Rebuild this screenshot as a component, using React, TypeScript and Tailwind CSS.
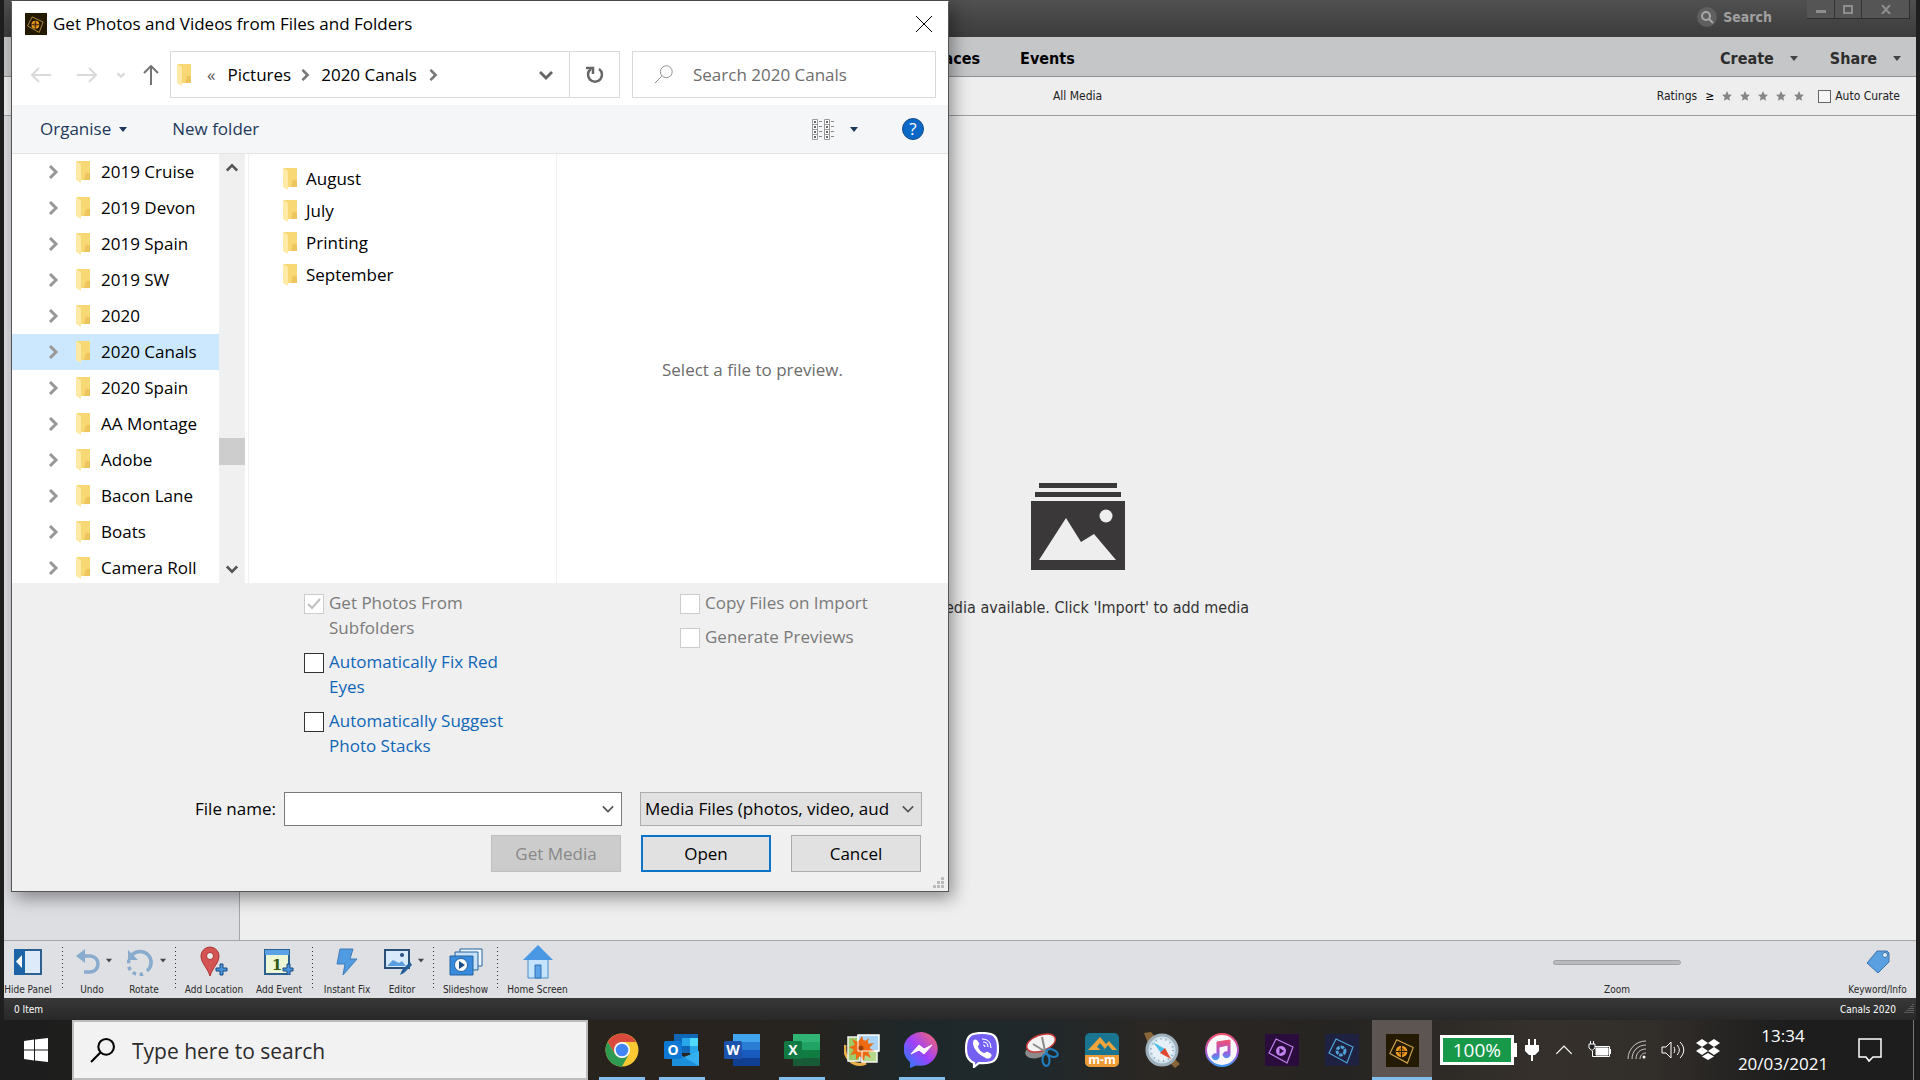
import React from "react";
import clsx from "clsx";

const treeFolders = [
  "2019 Cruise",
  "2019 Devon",
  "2019 Spain",
  "2019 SW",
  "2020",
  "2020 Canals",
  "2020 Spain",
  "AA Montage",
  "Adobe",
  "Bacon Lane",
  "Boats",
  "Camera Roll",
];

const files = ["August", "July", "Printing", "September"];

/* ---------- small icons ---------- */

const Folder = () => (
  <svg width="14" height="22" viewBox="0 0 14 22" className="shrink-0">
    <path d="M1 0h13v19H5z" fill="#f8d775" />
    <path d="M10 12h4v7H8z" fill="#eec55c" />
    <path d="M0 0l5 3v19l-5-3z" fill="#ffe9a6" />
  </svg>
);

const Chevron = ({
  dir,
  className,
  thick = 3,
}: {
  dir: "right" | "down" | "up";
  className?: string;
  thick?: number;
}) => (
  <svg
    width="14"
    height="14"
    viewBox="0 0 14 14"
    fill="none"
    stroke="currentColor"
    strokeWidth={thick}
    className={clsx("shrink-0", className)}
  >
    {dir === "right" && <path d="M4 1l6 6-6 6" />}
    {dir === "down" && <path d="M1 4l6 6 6-6" />}
    {dir === "up" && <path d="M1 10l6-6 6 6" />}
  </svg>
);

const Caret = ({ className }: { className?: string }) => (
  <svg width="8" height="5" viewBox="0 0 8 5" className={clsx("shrink-0", className)}>
    <path d="M0 0h8L4 5z" fill="currentColor" />
  </svg>
);

const Magnifier = ({
  size,
  thick = 1,
  className,
}: {
  size: number;
  thick?: number;
  className?: string;
}) => (
  <svg
    width={size}
    height={size}
    viewBox="0 0 24 24"
    fill="none"
    stroke="currentColor"
    strokeWidth={thick}
    className={clsx("shrink-0", className)}
  >
    <circle cx="15.500" cy="8.500" r="7.500" />
    <path d="M10 14L1 23" />
  </svg>
);

const OrganizerLogo = ({ size }: { size: number }) => (
  <svg width={size} height={size} viewBox="0 0 34 34" className="shrink-0">
    <path d="M0 0h34v34H0z" fill="#241a02" />
    <path d="M11 6l17 8-6 16-18-10z" fill="none" stroke="#d0a548" strokeWidth="1.200" />
    <circle cx="16" cy="18" r="6" fill="#f29a1c" />
    <path d="M16 12v12M10 18h12" stroke="#241a02" strokeWidth="1.200" />
    <circle cx="16" cy="18" r="3" fill="none" stroke="#241a02" strokeWidth=".7" />
  </svg>
);

/* ---------- organizer window behind the dialog ---------- */

const TitleBar = () => (
  <header className="flex h-[37px] items-start justify-end bg-linear-to-b from-[#505050] to-[#3c3c3c] pr-1 text-[#a0a0a0]">
    <button className="mt-[7px] mr-[35px] flex items-center gap-1.5 text-sm leading-5 font-bold">
      <span className="flex size-5 items-center justify-center rounded-full bg-[#5f5f5f]">
        <svg width="14" height="14" viewBox="0 0 14 14" fill="none" stroke="#a8a8a8" strokeWidth="2">
          <circle cx="6" cy="6" r="4" />
          <path d="M9 9l4 4" />
        </svg>
      </span>
      <span>Search</span>
    </button>
    <div className="mr-0.5 flex h-[19px] divide-x divide-[#333] border-r border-b border-[#2e2e2e] bg-[#555]">
      <button aria-label="Minimise" className="flex w-7 items-center justify-center">
        <svg width="10" height="10"><path d="M0 6h10v3H0z" fill="#8e8e8e" /></svg>
      </button>
      <button aria-label="Maximise" className="flex w-[27px] items-center justify-center">
        <svg width="10" height="9"><path d="M1 1h8v7H1z" fill="none" stroke="#8e8e8e" strokeWidth="2" /></svg>
      </button>
      <button aria-label="Close organizer" className="flex w-[47px] items-center justify-center">
        <svg width="10" height="9"><path d="M1 0l8 9M9 0L1 9" stroke="#8e8e8e" strokeWidth="2" /></svg>
      </button>
    </div>
  </header>
);

const NavBar = () => (
  <nav className="flex h-10 items-center border-b border-[#8f9091] bg-[#c5c6c8] pt-1 pr-[15px] pl-[924px] text-base font-bold">
    <button className="mr-10 text-black">Places</button>
    <button className="text-black">Events</button>
    <div className="ml-auto flex items-center gap-8 text-[#2d2d2d]">
      <button className="flex items-center gap-4">
        Create <Caret className="text-[#444]" />
      </button>
      <button className="flex items-center gap-4">
        Share <Caret className="text-[#444]" />
      </button>
    </div>
  </nav>
);

const FilterBar = () => (
  <div className="grid h-[39px] shrink-0 grid-cols-[1fr_auto_1fr] items-center border-b border-[#9f9f9f] bg-[#eee] pr-4 pl-[235px] text-xs text-[#222]">
    <span />
    <span className="pl-4">All Media</span>
    <div className="flex items-center justify-end">
      <span>Ratings</span>
      <span className="ml-2 text-black">≥</span>
      <span className="ml-2 flex gap-2">
        {[1, 2, 3, 4, 5].map((star) => (
          <button key={star} aria-label={`${star} stars`}>
            <svg width="10" height="10" viewBox="0 0 10 10">
              <path d="M5 0l1.500 3.500 3.500.3-2.700 2.400.8 3.600L5 7.900 1.900 9.800l.8-3.600L0 3.800l3.500-.3z" fill="#858585" />
            </svg>
          </button>
        ))}
      </span>
      <label className="ml-3.5 flex items-center gap-1">
        <input type="checkbox" className="size-[13px] appearance-none border border-[#666] bg-[#f6f6f6]" />
        Auto Curate
      </label>
    </div>
  </div>
);

const EmptyLibrary = () => (
  <main className="flex flex-1 bg-[#eee]">
    <aside className="w-[236px] shrink-0 border-r border-[#a5a6a8] bg-[#dddee2]" />
    <section className="flex flex-1 flex-col items-center pt-[367px] text-base text-[#333]">
      <svg width="96" height="87" viewBox="0 0 96 87">
        <path d="M9 0h78v5H9zM5 9h86v5H5zM1 18h94v69H1z" fill="#3a3839" />
        <path d="M9 77l27-42 15 24 13-8 22 26z" fill="#eee" />
        <circle cx="76" cy="33" r="6.500" fill="#eee" />
      </svg>
      <p className="mt-[26px]">No media available. Click &apos;Import&apos; to add media</p>
    </section>
  </main>
);

const Tool = ({
  label,
  width,
  caret,
  children,
}: {
  label: string;
  width: string;
  caret?: boolean;
  children: React.ReactNode;
}) => (
  <button className={clsx("flex shrink-0 flex-col items-center pt-px", width)}>
    <span className={clsx("flex h-10 items-center justify-center gap-1.5", caret && "pl-1")}>
      {children}
      {caret && <Caret className="mb-1 w-1.5 text-[#444]" />}
    </span>
    <span className="text-[10px] leading-4 whitespace-nowrap">{label}</span>
  </button>
);

const Separator = () => (
  <span className="mt-1.5 h-[43px] w-px shrink-0 bg-[repeating-linear-gradient(#333_0_1px,transparent_1px_4px)]" />
);

const ToolBar = () => (
  <footer className="flex h-[58px] shrink-0 overflow-hidden border-t border-[#a5a6a8] bg-[#dee0e4] text-[#2a2a2a]">
    <Tool label="Hide Panel" width="w-[48px]">
      <svg width="28" height="26" viewBox="0 0 28 26">
        <path d="M1 1h26v24H1z" fill="#dceafa" stroke="#2c618f" strokeWidth="2" />
        <path d="M0 0h11v26H0z" fill="#1c64a5" />
        <path d="M8 6v13l-6-6.500z" fill="#fff" />
      </svg>
    </Tool>
    <span className="w-2.5 shrink-0" />
    <Separator />
    <Tool label="Undo" width="w-[58px]" caret>
      <svg width="24" height="26" viewBox="0 0 24 26" fill="none" stroke="#89abce" strokeWidth="3.500">
        <path d="M5 7h9a7.500 7.500 0 010 16H8" />
        <path d="M9 0v14L0 7z" fill="#89abce" stroke="none" />
      </svg>
    </Tool>
    <Tool label="Rotate" width="w-[46px]" caret>
      <svg width="27" height="27" viewBox="0 0 27 27" fill="none" stroke="#89abce" strokeWidth="3.500">
        <path d="M5 6a11 11 0 1115 16" />
        <path d="M16 25a11 11 0 01-14-14" strokeDasharray="3.500 3.500" />
        <path d="M1 1v10h10z" fill="#89abce" stroke="none" />
      </svg>
    </Tool>
    <span className="w-2 shrink-0" />
    <Separator />
    <Tool label="Add Location" width="w-[76px]">
      <svg width="28" height="32" viewBox="0 0 28 32">
        <path d="M10 1a9 9 0 00-9 9c0 7 6 11 9 20 3-9 9-13 9-20a9 9 0 00-9-9z" fill="#d45353" stroke="#a93434" />
        <circle cx="10" cy="10" r="3.500" fill="#eee" stroke="#a93434" />
        <path d="M20 18h3v4h4v3h-4v4h-3v-4h-4v-3h4z" fill="#4a93dc" stroke="#174b80" />
      </svg>
    </Tool>
    <Tool label="Add Event" width="w-[54px]">
      <svg width="30" height="26" viewBox="0 0 30 26">
        <path d="M1 1h24v24H1z" fill="#edf7d5" stroke="#2c618f" strokeWidth="2" />
        <path d="M1 1h24v5H1z" fill="#5ba2e6" />
        <text x="13" y="21" textAnchor="middle" className="font-['DejaVu_Serif',serif] text-[15px] font-bold" fill="#2f5a16">1</text>
        <path d="M23 15h3v4h3v3h-3v4h-3v-4h-4v-3h4z" fill="#4a93dc" stroke="#174b80" />
      </svg>
    </Tool>
    <span className="w-1.5 shrink-0" />
    <Separator />
    <Tool label="Instant Fix" width="w-[68px]">
      <svg width="22" height="28" viewBox="0 0 22 28">
        <path d="M4 1h13l-3 10h7L7 27l2-11H1z" fill="#519be2" stroke="#3f7cb8" />
      </svg>
    </Tool>
    <Tool label="Editor" width="w-[42px]" caret>
      <svg width="28" height="26" viewBox="0 0 28 26">
        <path d="M1 1h24v18H1z" fill="#d7e9fb" stroke="#2a4f76" strokeWidth="2" />
        <path d="M3 17l6-6 6 3 3-2 4 5z" fill="#5b9ee0" />
        <circle cx="18" cy="6" r="2" fill="#234e7c" />
        <path d="M26 13l2 3-8 8-4 2 2-5z" fill="#245f9b" />
      </svg>
    </Tool>
    <span className="w-2.5 shrink-0" />
    <Separator />
    <Tool label="Slideshow" width="w-[63px]">
      <svg width="34" height="28" viewBox="0 0 34 28" stroke="#25629f">
        <path d="M11 1h22v17H11z" fill="#eef6ff" />
        <path d="M6 4h23v18H6z" fill="#c8e1f8" />
        <path d="M1 8h23v19H1z" fill="#388bdc" />
        <circle cx="12" cy="17" r="6.500" fill="#fff" />
        <path d="M10 13v8l6-4z" fill="#164f88" stroke="none" />
      </svg>
    </Tool>
    <Separator />
    <Tool label="Home Screen" width="w-[79px]">
      <svg width="30" height="34" viewBox="0 0 30 34">
        <path d="M5 14h20v19H5z" fill="#c5e3fc" stroke="#4b8bc9" />
        <path d="M15 0l15 15H0z" fill="#4a98e4" />
        <path d="M12 20h6v13h-6z" fill="#5ba2e6" stroke="#2e73b3" />
      </svg>
    </Tool>
    <div className="ml-auto flex shrink-0 flex-col items-center pt-0.5 text-[10px]">
      <span className="flex h-10 items-center">
        <input
          type="range"
          id="zoom"
          className="h-[5px] w-32 appearance-none rounded-full border border-[#a0a2a6] bg-[#b9babd] [&::-webkit-slider-thumb]:invisible"
        />
      </span>
      <label htmlFor="zoom" className="leading-4">Zoom</label>
    </div>
    <span className="w-[158px] shrink-0" />
    <Tool label="Keyword/Info" width="w-[77px]">
      <svg width="24" height="24" viewBox="0 0 24 24">
        <path d="M11 1h10l2 2v9L12 23 1 13z" fill="#5a9fe0" stroke="#3d76ad" strokeLinejoin="round" />
        <circle cx="19" cy="5" r="2.500" fill="#e3eefa" stroke="#3d76ad" />
      </svg>
    </Tool>
  </footer>
);

/* ---------- import dialog ---------- */

const AddressBar = () => (
  <div className="flex h-[47px] items-stretch pr-3 pl-[19px]">
    <div className="flex w-[139px] shrink-0 items-center text-[#d9d9d9]">
      <button aria-label="Back">
        <svg width="20" height="16" viewBox="0 0 20 16" fill="none" stroke="currentColor" strokeWidth="2">
          <path d="M8 1L1 8l7 7M1 8h19" />
        </svg>
      </button>
      <button aria-label="Forward" className="ml-[26px]">
        <svg width="20" height="16" viewBox="0 0 20 16" fill="none" stroke="currentColor" strokeWidth="2">
          <path d="M12 1l7 7-7 7M19 8H0" />
        </svg>
      </button>
      <button aria-label="Recent locations" className="ml-5">
        <Chevron dir="down" thick={4} className="size-2" />
      </button>
      <button aria-label="Up" className="ml-[18px] text-[#747474]">
        <svg width="16" height="20" viewBox="0 0 16 20" fill="none" stroke="currentColor" strokeWidth="2">
          <path d="M1 8l7-7 7 7M8 1v19" />
        </svg>
      </button>
    </div>
    <div className="flex w-[450px] shrink-0 border border-[#d9d9d9]">
      <div className="flex flex-1 items-center pr-4 pl-1.5">
        <Folder />
        <span className="ml-4 text-[#555]">«</span>
        <button className="ml-3">Pictures</button>
        <Chevron dir="right" className="ml-2 size-3 text-[#777]" />
        <button className="ml-2.5">2020 Canals</button>
        <Chevron dir="right" className="ml-2.5 size-3 text-[#777]" />
        <button aria-label="Previous locations" className="ml-auto text-[#666]">
          <Chevron dir="down" />
        </button>
      </div>
      <button aria-label="Refresh" className="flex w-[50px] items-center justify-center border-l border-[#d9d9d9] text-[#666]">
        <svg width="18" height="18" viewBox="0 0 18 18" fill="none" stroke="currentColor" strokeWidth="2.500">
          <path d="M13 3a7 7 0 11-8 0" />
          <path d="M0 2h7v6" />
        </svg>
      </button>
    </div>
    <label className="ml-3 flex flex-1 items-center border border-[#d9d9d9] pl-[21px] text-[#777]">
      <Magnifier size={19} />
      <input
        aria-label="Search 2020 Canals"
        placeholder="Search 2020 Canals"
        className="ml-5 min-w-0 flex-1 outline-none placeholder:text-[#6d6d6d]"
      />
    </label>
  </div>
);

const CommandBar = () => (
  <div className="mt-[7px] flex h-[49px] items-center border-b border-[#e2e4e6] bg-[#f4f6f8] pr-6 pl-7 text-[#1e395b]">
    <button className="flex items-center gap-2">
      Organise <Caret />
    </button>
    <button className="ml-[45px]">New folder</button>
    <button aria-label="Change your view" className="ml-auto flex items-center gap-4">
      <svg width="22" height="21" viewBox="0 0 22 21" fill="none">
        <path
          d="M.5.5h5v20h-5zM.5 5.500h5M.5 10.500h5M.5 15.500h5M12.500.5h5v20h-5zM12.500 5.500h5M12.500 10.500h5M12.500 15.500h5"
          stroke="#999"
          fill="#fff"
        />
        <path d="M7 2.500h3M7 7.500h3M7 12.500h3M7 17.500h3M19 2.500h3M19 7.500h3M19 12.500h3M19 17.500h3" stroke="#888" />
        <path d="M2 3h2M2 8h2M2 13h2M2 18h2M14 3h2M14 8h2M14 13h2M14 18h2" stroke="#666" strokeWidth="2" />
      </svg>
      <Caret />
    </button>
    <button
      aria-label="Help"
      className="ml-11 flex size-[22px] items-center justify-center rounded-full border border-[#124a86] bg-[#0a69c7] text-white"
    >
      ?
    </button>
  </div>
);

const Browser = () => (
  <div className="flex h-[429px] overflow-hidden">
    <ul className="w-[207px] shrink-0">
      {treeFolders.map((name) => (
        <li
          key={name}
          className={clsx("flex h-9 items-center pl-[34px]", name === "2020 Canals" && "bg-[#cce8ff]")}
        >
          <Chevron dir="right" thick={3} className="text-[#999]" />
          <span className="ml-4">
            <Folder />
          </span>
          <span className="ml-[11px] whitespace-nowrap">{name}</span>
        </li>
      ))}
    </ul>
    <div className="flex w-[26px] shrink-0 flex-col items-center bg-[#f0f0f0] py-2 text-[#555]">
      <Chevron dir="up" className="size-3" />
      <div className="mt-[264px] h-[27px] w-full bg-[#cdcdcd]" />
      <Chevron dir="down" className="mt-auto size-3" />
    </div>
    <ul className="ml-[3px] w-[309px] shrink-0 border-r border-l border-[#f2f2f2] pt-[9px] pl-[34px]">
      {files.map((name) => (
        <li key={name} className="flex h-8 items-center gap-[9px]">
          <Folder />
          {name}
        </li>
      ))}
    </ul>
    <p className="flex-1 pt-[204px] text-center text-[#6d6d6d]">Select a file to preview.</p>
  </div>
);

const Option = ({
  label,
  disabled,
  checked,
}: {
  label: string;
  disabled?: boolean;
  checked?: boolean;
}) => (
  <label className={clsx("flex items-start gap-[5px]", disabled ? "text-[#7a7a7a]" : "text-[#0f66b8]")}>
    <span className="relative mt-1 flex shrink-0">
      <input
        type="checkbox"
        disabled={disabled}
        defaultChecked={checked}
        className={clsx(
          "size-5 appearance-none border bg-white",
          disabled ? "border-[#ccc]" : "border-[#333]"
        )}
      />
      {checked && (
        <svg width="20" height="20" viewBox="0 0 20 20" className="absolute inset-0" fill="none" stroke="#bfbfbf" strokeWidth="2">
          <path d="M4 10l4 4 8-9" />
        </svg>
      )}
    </span>
    {label}
  </label>
);

const DialogFooter = () => (
  <div className="bg-[#f0f0f0] pt-[7px] pb-[19px]">
    <div className="flex h-[202px] items-start pl-[292px] leading-[25px]">
      <div className="flex w-[206px] flex-col gap-[9px]">
        <Option label="Get Photos From Subfolders" disabled checked />
        <Option label="Automatically Fix Red Eyes" />
        <Option label="Automatically Suggest Photo Stacks" />
      </div>
      <div className="ml-[170px] flex flex-col gap-[9px]">
        <Option label="Copy Files on Import" disabled />
        <Option label="Generate Previews" disabled />
      </div>
    </div>
    <div className="flex h-[34px] items-center justify-end pr-[26px]">
      <label htmlFor="file-name">File name:</label>
      <span className="relative ml-2 flex h-full w-[338px] items-center">
        <input id="file-name" className="h-full w-full border border-[#7a7a7a] bg-white px-1 outline-none" />
        <Chevron dir="down" thick={2} className="absolute right-2 size-3 text-[#555]" />
      </span>
      <span className="relative ml-[18px] flex h-full w-[282px] items-center">
        <select
          aria-label="File type"
          className="h-full w-full appearance-none border border-[#adadad] bg-[#e1e1e1] pl-1 text-black outline-none"
        >
          <option>Media Files (photos, video, aud</option>
        </select>
        <Chevron dir="down" thick={2} className="pointer-events-none absolute right-2 size-3 text-[#555]" />
      </span>
    </div>
    <div className="mt-[9px] flex h-[37px] justify-end gap-5 pr-[27px]">
      <button disabled className="w-[130px] border border-[#bfbfbf] bg-[#ccc] text-[#888]">
        Get Media
      </button>
      <button className="w-[130px] border-2 border-[#0b74c8] bg-[#e1e1e1]">Open</button>
      <button className="w-[130px] border border-[#adadad] bg-[#e1e1e1]">Cancel</button>
    </div>
    <svg width="12" height="12" viewBox="0 0 12 12" className="absolute right-[3px] bottom-0.5">
      <path d="M8 0h3v3H8zM4 4h3v3H4zM8 4h3v3H8zM0 8h3v3H0zM4 8h3v3H4zM8 8h3v3H8z" fill="#bbb" />
    </svg>
  </div>
);

const ImportDialog = () => (
  <div
    role="dialog"
    aria-label="Get Photos and Videos from Files and Folders"
    className="absolute top-px left-[11px] w-[938px] border border-[#555] border-t-white bg-white font-['Open_Sans','Noto_Sans',sans-serif] text-[17px] leading-6 text-black shadow-[4px_6px_16px_rgba(0,0,0,0.4)]"
  >
    <div className="flex h-[49px] items-center pr-4 pb-1.5 pl-[13px]">
      <OrganizerLogo size={22} />
      <h1 className="ml-1.5">Get Photos and Videos from Files and Folders</h1>
      <button aria-label="Close" className="ml-auto">
        <svg width="16" height="16" viewBox="0 0 16 16" stroke="#000">
          <path d="M0 0l16 16M16 0L0 16" />
        </svg>
      </button>
    </div>
    <AddressBar />
    <CommandBar />
    <Browser />
    <DialogFooter />
  </div>
);

/* ---------- taskbar ---------- */

const OfficeIcon = ({ letter, tones }: { letter: string; tones: string[] }) => (
  <svg width="36" height="34" viewBox="0 0 36 34">
    {tones.slice(0, 4).map((tone, i) => (
      <rect key={tone} x="9" y={1 + i * 8} width="27" height="8" fill={tone} />
    ))}
    <rect x="0" y="8" width="18" height="18" rx="1.500" fill={tones[4]} />
    <text x="9" y="22" textAnchor="middle" fill="#fff" className="font-['Open_Sans',sans-serif] text-[14px] font-bold">
      {letter}
    </text>
  </svg>
);

const ElementsIcon = ({ bg, fg, play }: { bg: string; fg: string; play?: boolean }) => (
  <svg width="34" height="34" viewBox="0 0 34 34">
    <path d="M0 1h34v32H0z" fill={bg} />
    <path d="M11 6l17 8-6 16-18-10z" fill="none" stroke={fg} strokeWidth="1.200" />
    {play ? (
      <>
        <circle cx="16" cy="18" r="5" fill={fg} />
        <path d="M14.500 15v6l4.500-3z" fill={bg} />
      </>
    ) : (
      <circle cx="16" cy="18" r="4" fill="none" stroke={fg} strokeWidth="3" strokeDasharray="3.500 1" />
    )}
  </svg>
);

const apps: { name: string; open?: boolean; active?: boolean; icon: React.ReactNode }[] = [
  {
    name: "Chrome",
    open: true,
    icon: (
      <svg width="34" height="34" viewBox="0 0 34 34">
        <circle cx="17" cy="17" r="16.500" fill="#fcc934" />
        <path d="M17 9h14.300A16.500 16.500 0 002.700 8.800L10 21z" fill="#d94a3d" />
        <path d="M2.700 8.800A16.500 16.500 0 0017 33.500l7-12.500-7 4-7-4z" fill="#2f9b52" />
        <circle cx="17" cy="17" r="8" fill="#fff" />
        <circle cx="17" cy="17" r="6.300" fill="#4285f4" />
      </svg>
    ),
  },
  {
    name: "Outlook",
    open: true,
    icon: (
      <svg width="36" height="34" viewBox="0 0 36 34">
        <path d="M10 1h24v19H10z" fill="#1066b5" />
        <path d="M18 5h8v8h-8z" fill="#28a8ea" />
        <path d="M26 5h8v8h-8z" fill="#50d9ff" />
        <path d="M26 13h8v8h-8z" fill="#28a8ea" />
        <path d="M8 33V17l14 8 13-7v15z" fill="#1b8fdc" />
        <path d="M35 18v15L20 24z" fill="#35b0ee" />
        <rect x="0" y="8" width="18" height="18" rx="1.500" fill="#0f78d4" />
        <text x="9" y="22" textAnchor="middle" fill="#fff" className="font-['Open_Sans',sans-serif] text-[14px] font-bold">O</text>
      </svg>
    ),
  },
  { name: "Word", icon: <OfficeIcon letter="W" tones={["#41a5ee", "#2b7cd3", "#185abd", "#103f91", "#1a52ad"]} /> },
  { name: "Excel", open: true, icon: <OfficeIcon letter="X" tones={["#2fb473", "#21a366", "#107c41", "#185c37", "#117a42"]} /> },
  {
    name: "Photo Gallery",
    icon: (
      <svg width="36" height="34" viewBox="0 0 36 34">
        <path d="M1 12c-2 13 9 23 21 18" fill="none" stroke="#e9b04a" strokeWidth="3" />
        <path d="M4 4h12v24H4z" fill="#9ccb6a" stroke="#f4f4f4" strokeWidth="1.500" />
        <path d="M18 12h15v17H18z" fill="#b4d98c" stroke="#f4f4f4" strokeWidth="1.500" />
        <path d="M14 2h21v16H14z" fill="#a9d3f5" stroke="#fff" strokeWidth="1.500" />
        <circle cx="18" cy="15" r="8" fill="#ee6a12" />
        <path
          d="M18 3l2 6 5-4-2 6 7-1-5 5 6 3-7 1 3 6-6-3-1 6-4-5-4 4v-6l-6 1 4-5-5-3 6-2-3-6 6 3z"
          fill="#ee6a12"
        />
        <path d="M14 2v16h21M18 18v11" fill="none" stroke="#fff" />
        <circle cx="17" cy="15" r="2.500" fill="#9c3f08" />
      </svg>
    ),
  },
  {
    name: "Messenger",
    open: true,
    icon: (
      <svg width="36" height="36" viewBox="0 0 36 36">
        <defs>
          <linearGradient id="msg" x1="0" y1="1" x2="1" y2="0">
            <stop offset="0" stopColor="#1a86ff" />
            <stop offset=".5" stopColor="#a040fa" />
            <stop offset="1" stopColor="#ff6a60" />
          </linearGradient>
        </defs>
        <path d="M18 0a18 17 0 00-12 30v6l6-2.500A18 17 0 1018 0z" fill="url(#msg)" />
        <path d="M7 22l8-9 5 4 8-4-8 9-5-4z" fill="#fff" stroke="#fff" strokeLinejoin="round" />
      </svg>
    ),
  },
  {
    name: "Viber",
    icon: (
      <svg width="34" height="36" viewBox="0 0 34 36">
        <path d="M17 1C5 1 1 4 1 17c0 8 3 12 8 14v4l5-4c14 1 19-2 19-14C33 4 29 1 17 1z" fill="#7360f2" stroke="#fff" strokeWidth="2.200" />
        <path d="M9 8c1-1 3-1 5 3 1 2-1 2-1 4 1 3 3 5 6 6 2 0 2-2 4-1 4 2 4 3 3 5-2 2-4 2-7 0C13 22 9 17 8 12c0-2 0-3 1-4z" fill="#fff" />
        <path d="M17 7c6 0 9 4 9 9M18 10c3 0 5 2 5 5M18 13c2 0 2 1 2 2" fill="none" stroke="#fff" strokeWidth="1.200" />
      </svg>
    ),
  },
  {
    name: "Snipping Tool",
    icon: (
      <svg width="36" height="36" viewBox="0 0 36 36">
        <ellipse cx="13" cy="19" rx="12" ry="7" fill="#8b8b8b" transform="rotate(-15 13 19)" />
        <ellipse cx="17" cy="11" rx="15" ry="8" fill="#f3f3f3" stroke="#c8393a" strokeWidth="1.500" transform="rotate(-20 17 11)" />
        <path d="M9 12l13 8M18 5l3 14" stroke="#8b8b8b" strokeWidth="2" />
        <g fill="none" stroke="#2180c4" strokeWidth="2">
          <ellipse cx="28" cy="21" rx="6" ry="3.500" transform="rotate(20 28 21)" />
          <ellipse cx="22" cy="28" rx="3.500" ry="6" transform="rotate(-5 22 28)" />
        </g>
      </svg>
    ),
  },
  {
    name: "Memory Map",
    icon: (
      <svg width="34" height="34" viewBox="0 0 34 34">
        <rect width="34" height="34" rx="5" fill="#1a7690" />
        <path d="M0 22h34v7a5 5 0 01-5 5H5a5 5 0 01-5-5z" fill="#ee9a35" />
        <path d="M3 17L15 4l6 7 3-3 8 9h-5l-4-5-4 5z" fill="#f0a43c" />
        <path d="M12 14l3-4 5 6-3 2z" fill="#1a7690" />
        <text x="17" y="31" textAnchor="middle" fill="#fff" className="font-['Open_Sans',sans-serif] text-[12px] font-bold">m-m</text>
      </svg>
    ),
  },
  {
    name: "Compass",
    icon: (
      <svg width="36" height="36" viewBox="0 0 36 36">
        <path d="M0 1l7-1 5 6-8 5zM25 30l6-3 5 5-5 4z" fill="#8a6538" />
        <circle cx="18" cy="18" r="15" fill="#cfe2ee" stroke="#9eb0bc" strokeWidth="3" />
        <circle cx="18" cy="18" r="11" fill="#e6f0f6" stroke="#87a5b8" strokeDasharray="1 4" strokeWidth="2" />
        <path d="M9 10l12 7-4 4z" fill="#4dbce9" />
        <path d="M21 16l6 11-11-6z" fill="#e0492f" />
      </svg>
    ),
  },
  {
    name: "iTunes",
    icon: (
      <svg width="34" height="34" viewBox="0 0 34 34">
        <defs>
          <linearGradient id="note" x1="0" y1="0" x2="0" y2="1">
            <stop offset="0" stopColor="#f2506e" />
            <stop offset=".6" stopColor="#a557d8" />
            <stop offset="1" stopColor="#3f9cf0" />
          </linearGradient>
        </defs>
        <circle cx="17" cy="17" r="16" fill="#f8f8fa" stroke="url(#note)" strokeWidth="2" />
        <path
          d="M12 9l13-2v15a3.500 3 0 11-2-3v-7l-9 2v10a3.500 3 0 11-2-3z"
          fill="url(#note)"
          stroke="url(#note)"
        />
      </svg>
    ),
  },
  { name: "Premiere Elements", icon: <ElementsIcon bg="#2b0d3d" fg="#c283f0" play /> },
  { name: "Photoshop Elements", icon: <ElementsIcon bg="#1f2140" fg="#4fa3d8" /> },
  { name: "Elements Organizer", open: true, active: true, icon: <OrganizerLogo size={33} /> },
];

const Tray = () => (
  <div className="ml-auto flex items-center text-white">
    <div className="flex items-center">
      <span className="border-3 border-white bg-[#18994a] px-2.5 text-[19px] leading-6">100%</span>
      <span className="h-3.5 w-[3px] bg-white" />
    </div>
    <svg width="14" height="22" viewBox="0 0 14 22" className="ml-2" fill="#fff">
      <path d="M3 0h2v6h4V0h2v6h3v6l-4 4H8v6H6v-6H4l-4-4V6h3z" />
    </svg>
    <button aria-label="Show hidden icons" className="ml-4">
      <Chevron dir="up" thick={1} className="size-[18px]" />
    </button>
    <svg width="24" height="18" viewBox="0 0 24 18" className="ml-[15px]" fill="none" stroke="#fff">
      <path d="M7 5.500h14.500v10H4.500V10M22.500 8v5" />
      <path d="M8 7h12v7H8z" fill="#fff" />
      <path d="M1 3h6v4L4 9.500 1 7zM2.500 0v3M5.500 0v3" fill="#222" />
    </svg>
    <svg width="20" height="20" viewBox="0 0 20 20" className="ml-[15px]" fill="none" stroke="#c4c4c4">
      <path d="M1 19C1 9 9 1 19 1M5 19C5 11 11 5 19 5M9 19c0-6 4-10 10-10M13 19c0-3 2-6 6-6" />
      <circle cx="17" cy="17" r="1.500" fill="#fff" stroke="none" />
    </svg>
    <svg width="24" height="20" viewBox="0 0 24 20" className="ml-3.5" fill="none" stroke="#fff">
      <path d="M1 7h4l5-5v16l-5-5H1z" />
      <path d="M13 7c1 2 1 4 0 6M16 5c3 3 3 7 0 10M19 2c5 5 5 11 0 16" />
    </svg>
    <svg width="24" height="22" viewBox="0 0 24 22" className="ml-[11px]" fill="#fff">
      <path d="M6 0l6 4-6 4-6-4zM18 0l6 4-6 4-6-4zM6 8l6 4-6 4-6-4zM18 8l6 4-6 4-6-4zM12 14l6 3.500L12 21l-6-3.500z" />
    </svg>
    <div className="ml-3.5 w-[98px] text-center text-[17px] leading-7">
      <div>13:34</div>
      <div>20/03/2021</div>
    </div>
    <button aria-label="Notifications" className="mr-[31px] ml-[26px]">
      <svg width="24" height="25" viewBox="0 0 24 25" fill="none" stroke="#fff" strokeWidth="1.500">
        <path d="M1 1h22v18h-8l-4 4-3-4H1z" />
      </svg>
    </button>
    <span className="mr-1.5 h-15 w-px bg-[#777]" />
  </div>
);

const Taskbar = () => (
  <div className="flex h-15 shrink-0 bg-[linear-gradient(90deg,#1d1d1d_0%,#29231d_31%,#27231f_42%,#1e282a_48%,#20282b_54%,#2b2723_60%,#262422_70%,#35302b_80%,#322e2a_86%,#1d1d1d_93%)] font-['Open_Sans','Noto_Sans',sans-serif]">
    <button aria-label="Start" className="flex w-[72px] shrink-0 items-center justify-center">
      <svg width="24" height="24" viewBox="0 0 24 24" fill="#fff">
        <path d="M0 3l10-1.500v10H0zM11 1.400L24 0v11.500H11zM0 12.500h10v10L0 21zM11 12.500h13V24l-13-1.500z" />
      </svg>
    </button>
    <label className="flex w-[516px] shrink-0 items-center border-2 border-[#bdbdbd] bg-[#f2f2f2] pl-4 text-black">
      <Magnifier size={25} thick={2} />
      <input
        aria-label="Type here to search"
        placeholder="Type here to search"
        className="ml-[17px] min-w-0 flex-1 pt-1 text-[21px] outline-none placeholder:text-[#2b2b2b]"
      />
    </label>
    <div className="ml-1 flex shrink-0">
      {apps.map((app) => (
        <button
          key={app.name}
          aria-label={app.name}
          className={clsx("relative flex w-15 items-center justify-center", app.active && "bg-[#5c5551]")}
        >
          {app.icon}
          {app.open && (
            <span
              className={clsx("absolute bottom-0 h-[3px] bg-[#83bdec]", app.active ? "inset-x-0" : "inset-x-[7px]")}
            />
          )}
        </button>
      ))}
    </div>
    <Tray />
  </div>
);

const App = () => {
  return (
    <div className="relative flex h-screen flex-col overflow-hidden bg-[#1f1f1f]">
      <div className="flex min-h-0 flex-1 flex-col px-1 font-['DejaVu_Sans_Condensed','Noto_Sans',sans-serif]">
        <TitleBar />
        <NavBar />
        <FilterBar />
        <EmptyLibrary />
        <ToolBar />
        <div className="flex h-[22px] shrink-0 items-center justify-between bg-linear-to-b from-[#383838] to-[#282828] pr-0.5 pl-2.5 text-[10px] text-white">
          <span>0 Item</span>
          <span className="flex items-center gap-2">
            Canals 2020
            <svg width="10" height="10" viewBox="0 0 10 10">
              <path
                d="M9 0v10M7 2v8M5 4v6M3 6v4M1 8v2"
                stroke="#888"
                strokeDasharray="1 1"
              />
            </svg>
          </span>
        </div>
      </div>
      <Taskbar />
      <ImportDialog />
    </div>
  );
};

export default App;
